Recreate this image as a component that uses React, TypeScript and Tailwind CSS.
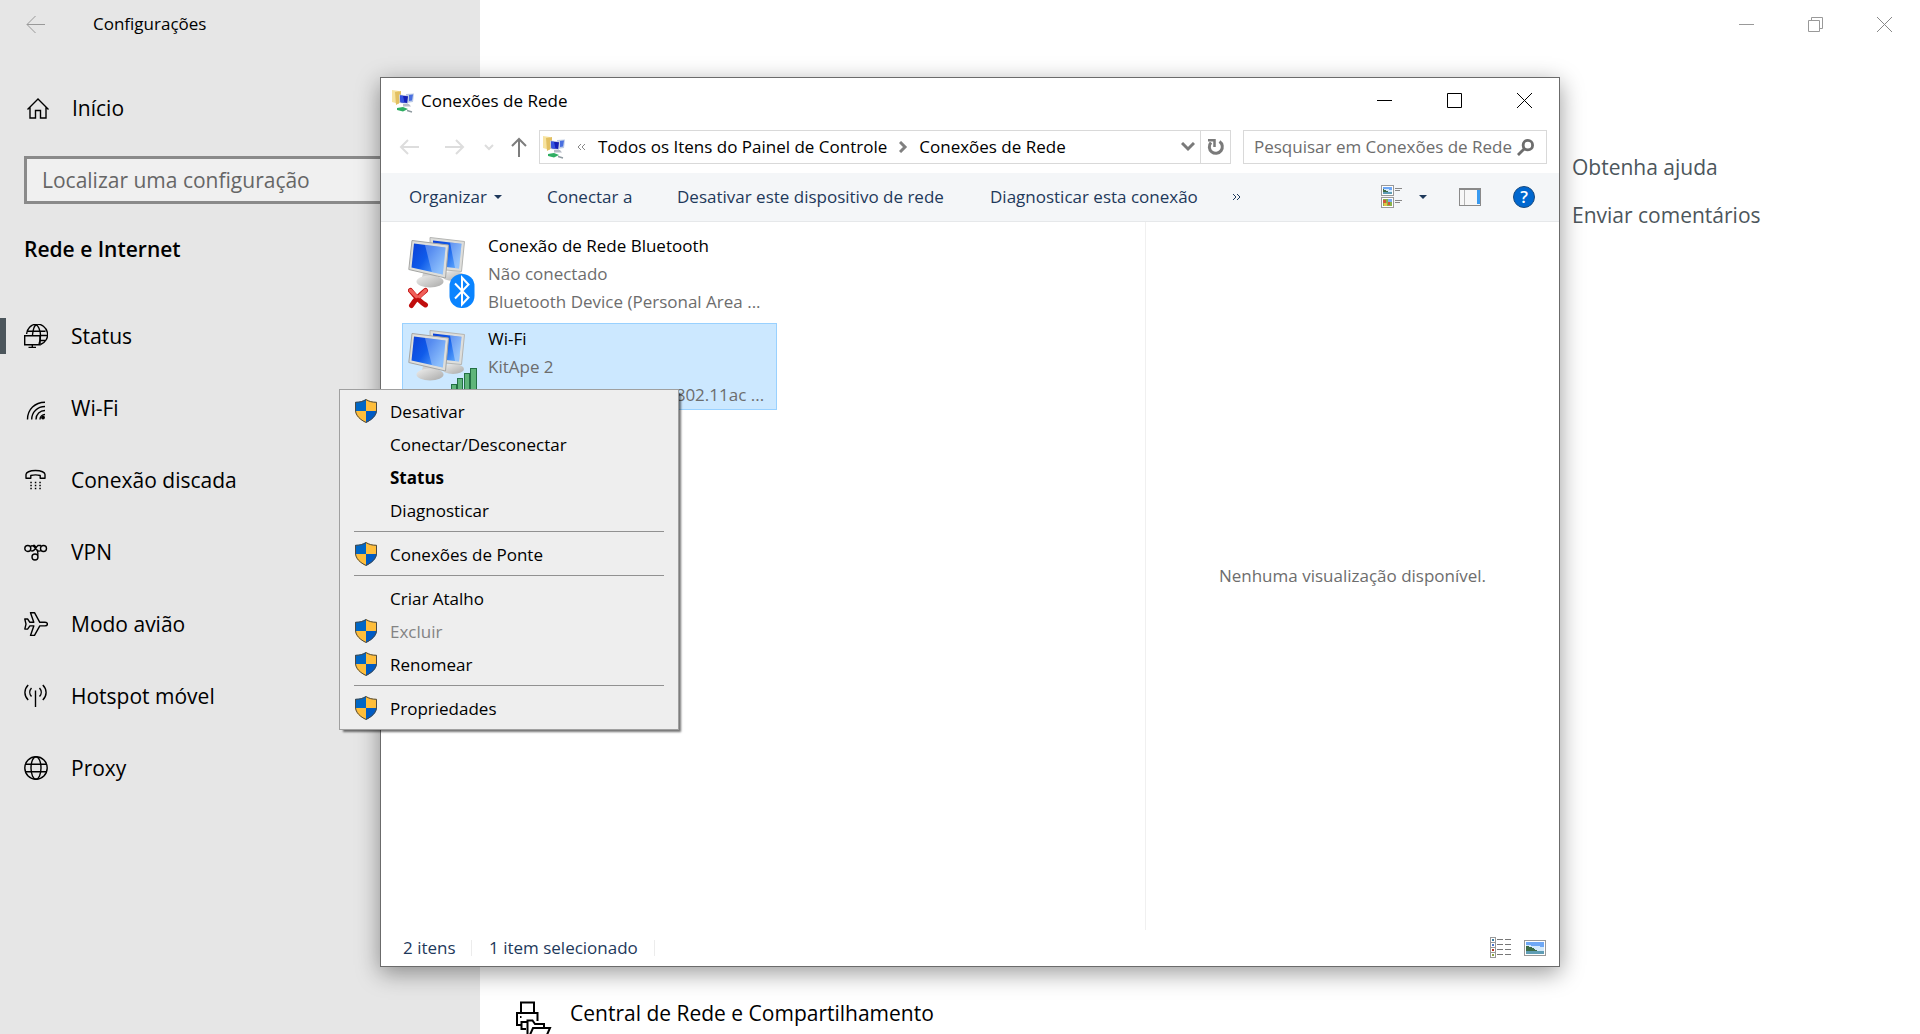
import React from "react";

type Children = { children: React.ReactNode };

/* ---------- line icons of the settings sidebar ---------- */

function LineIcon({ children }: Children) {
  return (
    <svg width="24" height="24" viewBox="0 0 24 24" fill="none" stroke="#000" strokeWidth="1.4" aria-hidden="true">
      {children}
    </svg>
  );
}

const HomeIcon = () => (
  <LineIcon>
    <path d="M1.5 12.5 12 2l10.5 10.5M4 10.5V21h5.500v-7.500h5V21H20V10.500" />
  </LineIcon>
);

const StatusIcon = () => (
  <LineIcon>
    <path d="M2.600 10A10.500 10.500 0 1 1 16.500 20.500M3 7.300h18.500M16 11.500h6.800M16.500 16.500h5M8.500 11C8.800 6 10.500 1 12.200 1s4.300 5 4.300 10.500c0 3-.4 6-1.500 8.500" />
    <path d="M.7 11.700h15.300v9H.7zM8.300 20.700v2.600M4.500 23.500h7.500" />
  </LineIcon>
);

const WifiIcon = () => (
  <LineIcon>
    <path d="M3.500 23.500C3.500 13.500 11 6.200 21 6.200M7.700 23.500c0-7.500 5.800-13 13.300-13M12 23.500c0-5.200 4-9 9-9M16 23.500c0-2.800 2.200-5 5-5" />
    <circle cx="19" cy="21.500" r="1.900" fill="#000" stroke="none" />
  </LineIcon>
);

const DialIcon = () => (
  <LineIcon>
    <path d="M2 10.200V6.500C2 4.500 5.500 2.500 11.500 2.500S21 4.500 21 6.500v3.700h-4.800V7.500c-3-.8-6.400-.8-9.400 0v2.700z" strokeLinejoin="round" />
    <path d="M6.300 14.500h10.500M6.300 17.500h10.500M6.300 20.500h10.500" strokeDasharray="1.500 3" />
  </LineIcon>
);

const VpnIcon = () => (
  <LineIcon>
    <circle cx="3.800" cy="8.500" r="3" />
    <circle cx="19.500" cy="8.500" r="3" />
    <circle cx="11" cy="17" r="3" />
    <path d="M6.300 6.500C9 4.500 10.500 7 11.800 8.800S15 12 17 10.500M9 5.500h1.500l1.500 2 2-2H17M6.500 10.500c2 1.200 3.200.5 4.600-1.500l1.500-2M13.500 15.500c1.500-2.500-1-4 .2-6" />
  </LineIcon>
);

const PlaneIcon = () => (
  <LineIcon>
    <path
      d="M.8 7h2.800l2.300 3.300h3.900L6.500.7h4l5.300 9.600h5.200c3.200 0 3.200 3.600 0 3.600h-5.200l-5.300 9.500h-4l3.300-9.500H5.900l-2.300 3.200H.8l1.200-5z"
      strokeLinejoin="round"
    />
  </LineIcon>
);

const HotspotIcon = () => (
  <LineIcon>
    <path d="M11.500 6.500V23M7.500 4c-2.300 2.500-2.300 6 0 8.500M4.200 1C-.2 5.500-.2 11.500 4.200 16M15.500 4c2.300 2.500 2.300 6 0 8.500M18.800 1c4.400 4.500 4.400 10.500 0 15" />
  </LineIcon>
);

const GlobeIcon = () => (
  <LineIcon>
    <circle cx="12" cy="12" r="11.200" />
    <ellipse cx="12" cy="12" rx="5" ry="11.200" />
    <path d="M2 8.200h20M2 15.800h20" />
  </LineIcon>
);

function SharingIcon() {
  return (
    <svg width="37" height="37" viewBox="0 0 37 37" fill="none" stroke="#000" strokeWidth="2" aria-hidden="true">
      <path d="M6 12V1.500h13V12M19 12h3.500v8M6 12H2v12h4.500M6 12h13M11 28H6.500v-7H12" />
      <path d="M12.500 36V19.500h5l2.500 3.500h9v4M14 36l4-9h17l-4 9" fill="#fff" />
      <path d="M5 16h1.500" />
    </svg>
  );
}

/* ---------- coloured icons of the explorer window ---------- */

function NetworkFolderIcon() {
  return (
    <svg width="24" height="24" viewBox="0 0 24 24" aria-hidden="true">
      <path d="M1 1l7 1v13l-7-2z" fill="#f7e3a0" />
      <path d="M4 3l6-1v11l-5 3z" fill="#e2c062" />
      <path d="M15 5l8-.5-1 8.500-7 1z" fill="#bccbe6" />
      <path d="M18 6l4-.5-1 6-3 .5z" fill="#4a70e0" />
      <path d="M8 5.500l10 1-1 8.500-8.500-1z" fill="#c9d2e4" />
      <path d="M9 6.500l8 .8-.8 6.700-6.700-.8z" fill="#1420b4" />
      <path d="M9 6.500l3 .3 1.500 7-4-.6z" fill="#3554e0" />
      <path d="M12 15h6l2 2.500h-8z" fill="#b7bcc6" />
      <path d="M6 19l6-1 5 2-5 2.500-6-1.500z" fill="#2fae62" />
      <path d="M16 21.500l5 1.500" stroke="#8f9aa0" strokeWidth="1.400" />
    </svg>
  );
}

function Monitors({ id }: { id: string }) {
  return (
    <>
      <defs>
        <linearGradient id={id} x1="0" y1="0" x2="1" y2="0.6">
          <stop offset="0" stopColor="#0b3fd6" />
          <stop offset="0.5" stopColor="#0f5bea" />
          <stop offset="1" stopColor="#5ba4fb" />
        </linearGradient>
        <linearGradient id={`${id}-base`} x1="0" y1="0" x2="1" y2="1">
          <stop offset="0" stopColor="#efefee" />
          <stop offset="1" stopColor="#a9a9a8" />
        </linearGradient>
      </defs>
      <ellipse cx="45" cy="39" rx="11" ry="5" fill={`url(#${id}-base)`} />
      <path d="M22 .5l34.500 4-3 30-31-3z" fill="#dededb" stroke="#b4b5b3" />
      <path d="M25 3.500l28.500 3.300-2.500 24.700-26-3z" fill={`url(#${id})`} />
      <path d="M42 5.500l11.500 1.300L51 31.500l-4-.5z" fill="#fff" opacity="0.35" />
      <path d="M15 36h13l2 8c-4 3-14 3-17 0z" fill="#d2d2d2" />
      <ellipse cx="22" cy="44.500" rx="13.500" ry="6" fill={`url(#${id}-base)`} />
      <path d="M4 3.500l36.500 4.500-3 33L.8 32.500z" fill="#dededb" stroke="#a4a5a3" />
      <path d="M6 6.500l31.500 4-2.700 27L3.500 30.500z" fill={`url(#${id})`} />
      <path d="M17 8l20.500 2.500-2.700 27-11-2.500z" fill="#fff" opacity="0.3" />
    </>
  );
}

function BluetoothConnectionIcon() {
  return (
    <svg width="68" height="72" viewBox="0 0 68 72" aria-hidden="true">
      <Monitors id="bt-screen" />
      <path d="M2.500 53.500c4 5 9 11 15 14.500M17.500 53.500c-5 4-11 10-14 15" fill="none" stroke="#c00d0d" strokeWidth="5" strokeLinecap="round" />
      <path d="M2.500 53.500l6 6M17.500 53.500l-6 6" stroke="#f0605a" strokeWidth="3.500" strokeLinecap="round" />
      <rect x="41.500" y="37" width="25" height="34" rx="12" fill="#0a84ff" />
      <path d="M47 46.500l13.500 14-6.500 7V40.500l6.500 7L47 61.500" fill="none" stroke="#fff" strokeWidth="2" />
    </svg>
  );
}

function WifiConnectionIcon() {
  return (
    <svg width="70" height="72" viewBox="0 0 70 72" aria-hidden="true">
      <Monitors id="wifi-screen" />
      <g fill="#5fb57a" stroke="#237044">
        <rect x="43.500" y="54.500" width="5" height="17" />
        <rect x="49.500" y="48.500" width="5" height="23" />
        <rect x="56.500" y="43.500" width="5" height="28" />
        <rect x="62.500" y="38.500" width="6" height="33" />
      </g>
    </svg>
  );
}

function ShieldIcon() {
  return (
    <svg width="24" height="24" viewBox="0 0 24 24" aria-hidden="true">
      <path d="M12 0v12H1V3C6 3 9 2 12 0z" fill="#0067c5" />
      <path d="M12 0v12h11V3c-5 0-8-1-11-3z" fill="#ffbe3b" />
      <path d="M1 12h11v12C6 21 1.500 17 1 12z" fill="#ffbe3b" />
      <path d="M23 12H12v12c6-3 10.500-7 11-12z" fill="#005bc4" />
      <path d="M12 .6C9 2.400 6 3.300 1.500 3.300V11c0 5.500 5 10 10.500 12.400C17.500 21 22.500 16.500 22.500 11V3.300C18 3.300 15 2.400 12 .6z" fill="none" stroke="#4b4a45" />
    </svg>
  );
}

function Landscape({ x, y, w, h }: { x: number; y: number; w: number; h: number }) {
  return (
    <svg x={x} y={y} width={w} height={h} viewBox="0 0 18 12" preserveAspectRatio="none">
      <path d="M0 0h18v12H0z" fill="#6fa8f5" />
      <path d="M0 3l18 2v4H0z" fill="#d3e9fb" />
      <path d="M0 4l5 1 7 4H0z" fill="#3d6b45" />
      <path d="M0 9h18v3H0z" fill="#5f9db5" />
    </svg>
  );
}

function ViewIcon() {
  return (
    <svg width="22" height="24" viewBox="0 0 22 24" shapeRendering="crispEdges" aria-hidden="true">
      <path d="M.5.500h12v10H.5zM.5 12.500h12v10H.5z" fill="#fff" stroke="#999" />
      <Landscape x={2} y={2} w={9} h={7} />
      <path d="M2 14h9v7H2z" fill="#8ab24a" />
      <path d="M2 15h3v3H2zM7 17h2v3H7z" fill="#d0583a" />
      <path d="M7 14h4v3H7z" fill="#7aaaf0" />
      <path d="M3 18h3v3H3z" fill="#e5c445" />
      <path d="M14 3.500h7M14 5.500h5M14 15.500h7M14 17.500h5" stroke="#888" />
    </svg>
  );
}

function PaneIcon() {
  return (
    <svg width="22" height="18" viewBox="0 0 22 18" shapeRendering="crispEdges" aria-hidden="true">
      <path d="M.5 1h21v16H.5z" fill="#f7f7f7" stroke="#8a8a8a" />
      <path d="M0 0h22v2H0z" fill="#8a8a8a" />
      <path d="M5.500 2v15" stroke="#b5b5b5" />
      <path d="M18 2h3v14h-3z" fill="#3a9bf0" />
    </svg>
  );
}

function DetailsIcon() {
  return (
    <svg width="22" height="22" viewBox="0 0 22 22" shapeRendering="crispEdges" aria-hidden="true">
      <path d="M.5.500h5v20h-5zM.5 5.500h5M.5 10.500h5M.5 15.500h5" fill="#fff" stroke="#999" />
      <path d="M2 2h2v2H2z" fill="#3b7ca0" />
      <path d="M2 7h2v2H2z" fill="#4a74c9" />
      <path d="M2 12h2v2H2z" fill="#b5301c" />
      <path d="M2 17h2v2H2z" fill="#8ca23c" />
      <path d="M7 2.500h6M15 2.500h6M7 7.500h6M15 7.500h6M7 12.500h6M15 12.500h6M7 17.500h6M15 17.500h6" stroke="#777" />
    </svg>
  );
}

function ThumbnailsIcon() {
  return (
    <svg width="22" height="16" viewBox="0 0 22 16" shapeRendering="crispEdges" aria-hidden="true">
      <path d="M.5.500h21v15H.5z" fill="#fff" stroke="#999" />
      <Landscape x={2} y={2} w={18} h={12} />
    </svg>
  );
}

function Stroke({ d, w, h, color, width }: { d: string; w: number; h: number; color: string; width: number }) {
  return (
    <svg width={w} height={h} viewBox={`0 0 ${w} ${h}`} fill="none" stroke={color} strokeWidth={width} aria-hidden="true">
      <path d={d} />
    </svg>
  );
}

function Caret() {
  return (
    <svg width="8" height="4" viewBox="0 0 8 4" aria-hidden="true">
      <path d="M0 0h8L4 4z" fill="#1e395b" />
    </svg>
  );
}

/* ---------- settings page ---------- */

const navItems = [
  { label: "Status", Icon: StatusIcon, active: true },
  { label: "Wi-Fi", Icon: WifiIcon },
  { label: "Conexão discada", Icon: DialIcon },
  { label: "VPN", Icon: VpnIcon },
  { label: "Modo avião", Icon: PlaneIcon },
  { label: "Hotspot móvel", Icon: HotspotIcon },
  { label: "Proxy", Icon: GlobeIcon },
];

function Sidebar() {
  return (
    <aside className="flex w-[480px] shrink-0 flex-col bg-[#e6e6e6]">
      <header className="flex h-12 items-center pl-[26px] text-[17px]">
        <button aria-label="Voltar" className="w-[67px]">
          <Stroke d="M1 9.500h18M9.500 1L1 9.500 9.500 18" w={20} h={19} color="#999" width={1} />
        </button>
        <h1>Configurações</h1>
      </header>
      <button className="mt-[37px] flex h-12 items-center gap-[22px] pl-[26px] text-left text-[21px]">
        <HomeIcon />
        Início
      </button>
      <div className="mt-[23px] px-6">
        <input
          type="text"
          aria-label="Localizar uma configuração"
          placeholder="Localizar uma configuração"
          className="h-12 w-full border-[3px] border-[#8a8a8a] bg-[#f0f0f0] px-[15px] text-[21px] placeholder:text-[#666]"
        />
      </div>
      <h2 className="mt-7 pl-6 text-[21px] leading-[34px] font-semibold">Rede e Internet</h2>
      <nav className="mt-[34px] flex flex-col">
        {navItems.map(({ label, Icon, active }) => (
          <a key={label} href="#" className="flex h-[72px] items-center text-[21px]">
            <span className={active ? "h-9 w-[6px] bg-[#4c565c]" : "w-[6px]"} />
            <span className="mr-[23px] ml-[18px]">
              <Icon />
            </span>
            <span className="pt-[2px]">{label}</span>
          </a>
        ))}
      </nav>
    </aside>
  );
}

function SettingsMain() {
  return (
    <main className="flex grow flex-col bg-white">
      <div className="flex h-12 justify-end pr-px">
        <button aria-label="Minimizar configurações" className="grid w-[69px] place-items-center">
          <Stroke d="M0 7.500h15" w={15} h={15} color="#999" width={1} />
        </button>
        <button aria-label="Restaurar configurações" className="grid w-[69px] place-items-center">
          <Stroke d="M.5 3.500h11v11H.5zM3.500 3V.5h11v11H12" w={15} h={15} color="#999" width={1} />
        </button>
        <button aria-label="Fechar configurações" className="grid w-[69px] place-items-center">
          <Stroke d="M0 0l15 15M15 0L0 15" w={15} h={15} color="#888" width={1} />
        </button>
      </div>
      <div className="mt-[103px] flex w-[348px] flex-col items-start gap-4 self-end text-[21px] leading-8 text-[#4c565c]">
        <a href="#">Obtenha ajuda</a>
        <a href="#">Enviar comentários</a>
      </div>
      <a href="#" className="mt-auto flex h-[33px] items-start gap-[18px] pl-[35px] text-[21px] leading-6">
        <SharingIcon />
        Central de Rede e Compartilhamento
      </a>
    </main>
  );
}

/* ---------- explorer window ---------- */

function TitleBar() {
  return (
    <header className="flex h-[45px] shrink-0 items-stretch">
      <div className="flex grow items-center gap-[6px] pl-[10px] text-[17px]">
        <NetworkFolderIcon />
        <h2>Conexões de Rede</h2>
      </div>
      <button aria-label="Minimizar" className="grid w-[70px] place-items-center">
        <Stroke d="M0 7.500h15" w={15} h={15} color="#000" width={1} />
      </button>
      <button aria-label="Maximizar" className="grid w-[70px] place-items-center">
        <Stroke d="M.5.500h14v14H.5z" w={15} h={15} color="#000" width={1} />
      </button>
      <button aria-label="Fechar" className="grid w-[70px] place-items-center">
        <Stroke d="M0 0l15 15M15 0L0 15" w={15} h={15} color="#000" width={1} />
      </button>
    </header>
  );
}

function AddressRow() {
  return (
    <div className="flex h-[50px] shrink-0 items-center pr-3 pb-[2px] pl-[18px] text-[17px]">
      <button aria-label="Anterior" className="mr-[26px]">
        <Stroke d="M2 8h18M9 1L2 8l7 7" w={20} h={16} color="#ddd" width={2} />
      </button>
      <button aria-label="Próximo" className="mr-[19px]">
        <Stroke d="M0 8h18M11 1l7 7-7 7" w={20} h={16} color="#ddd" width={2} />
      </button>
      <button aria-label="Locais recentes" className="mr-[17px]">
        <Stroke d="M1 1l4 4 4-4" w={10} h={7} color="#ddd" width={2} />
      </button>
      <button aria-label="Acima" className="mr-3">
        <Stroke d="M8 20V2M1 9l7-7 7 7" w={16} h={20} color="#7d7d7d" width={2} />
      </button>
      <div className="flex h-[34px] grow items-stretch border border-[#d9d9d9]">
        <div className="flex grow items-center pl-[2px]">
          <NetworkFolderIcon />
          <span className="mr-3 ml-[11px]">
            <Stroke d="M4 1L1 4l3 3M8 1L5 4l3 3" w={9} h={8} color="#888" width={1} />
          </span>
          <button>Todos os Itens do Painel de Controle</button>
          <span className="mr-[11px] ml-[12px]">
            <Stroke d="M1 1l5 5-5 5" w={9} h={12} color="#808080" width={3} />
          </span>
          <button>Conexões de Rede</button>
          <button aria-label="Locais anteriores" className="mr-[5px] ml-auto">
            <Stroke d="M1 1l6 6 6-6" w={14} h={10} color="#7a7a7a" width={3} />
          </button>
        </div>
        <button aria-label="Atualizar" className="grid w-[30px] place-items-center border-l border-[#d9d9d9]">
          <svg width="18" height="18" viewBox="0 0 18 18" fill="none" stroke="#7a7a7a" strokeWidth="3" aria-hidden="true">
            <path d="M12.500 3.500a6.500 6.500 0 1 1-8.500 1" />
            <path d="M1 2.300h6.500V9" strokeWidth="2.500" />
          </svg>
        </button>
      </div>
      <div className="ml-3 flex h-[34px] w-[304px] items-center border border-[#d9d9d9] pr-3 pl-[10px]">
        <input
          type="text"
          aria-label="Pesquisar em Conexões de Rede"
          placeholder="Pesquisar em Conexões de Rede"
          className="w-full min-w-0 outline-none placeholder:text-[#6d6d6d]"
        />
        <svg className="shrink-0" width="17" height="17" viewBox="0 0 18 18" fill="none" stroke="#6d6d6d" strokeWidth="3" aria-hidden="true">
          <circle cx="11.500" cy="6.500" r="5" />
          <path d="M8 10l-7 7" />
        </svg>
      </div>
    </div>
  );
}

function Toolbar() {
  return (
    <div className="flex h-[49px] shrink-0 items-center border-b border-[#e6e8ea] bg-[#f4f6f8] pl-7 text-[17px] text-[#1e395b]">
      <button className="flex w-[138px] items-center gap-[7px]">
        Organizar
        <Caret />
      </button>
      <button className="w-[130px] text-left">Conectar a</button>
      <button className="w-[313px] text-left">Desativar este dispositivo de rede</button>
      <button className="w-[242px] text-left">Diagnosticar esta conexão</button>
      <button aria-label="Mais comandos">
        <Stroke d="M1 1l3 3-3 3M5 1l3 3-3 3" w={9} h={8} color="#1e395b" width={1} />
      </button>
      <button aria-label="Modo de exibição" className="mr-8 ml-auto flex items-center gap-4">
        <ViewIcon />
        <Caret />
      </button>
      <button aria-label="Painel de visualização" className="mr-8">
        <PaneIcon />
      </button>
      <button
        aria-label="Ajuda"
        className="mr-6 grid size-[22px] place-items-center rounded-full border border-[#174a80] bg-[#0067cf] text-[17px] leading-5 font-semibold text-white"
      >
        ?
      </button>
    </div>
  );
}

function Connection({
  icon,
  name,
  state,
  device,
  selected = false,
}: {
  icon: React.ReactNode;
  name: string;
  state: string;
  device: string;
  selected?: boolean;
}) {
  return (
    <li
      className={
        selected
          ? "flex h-[87px] border border-[#99d1ff] bg-[#cce8ff] pt-px pl-[5px]"
          : "flex h-[87px] border border-transparent pt-px pl-[5px]"
      }
    >
      <span className="mt-[5px] w-20 shrink-0">{icon}</span>
      <div className="min-w-0 text-[17px] leading-7 whitespace-nowrap text-[#6d6d6d]">
        <p className="text-black">{name}</p>
        <p>{state}</p>
        <p>{device}</p>
      </div>
    </li>
  );
}

function ExplorerWindow() {
  return (
    <section
      aria-label="Conexões de Rede"
      className="absolute top-[77px] right-[360px] bottom-[67px] left-[380px] flex flex-col border border-[#6b6b6b] bg-white shadow-[0_6px_22px_rgba(0,0,0,0.4)]"
    >
      <TitleBar />
      <AddressRow />
      <Toolbar />
      <div className="flex min-h-0 grow">
        <ul className="flex grow flex-col gap-[6px] pt-2 pl-[21px] [&>li]:w-[375px]">
          <Connection
            icon={<BluetoothConnectionIcon />}
            name="Conexão de Rede Bluetooth"
            state="Não conectado"
            device="Bluetooth Device (Personal Area ..."
          />
          <Connection
            icon={<WifiConnectionIcon />}
            name="Wi-Fi"
            state="KitApe 2"
            device="Realtek 8821C Wireless 802.11ac ..."
            selected
          />
        </ul>
        <aside className="grid w-[414px] shrink-0 place-items-center border-l border-[#f0f0f0] text-[17px] text-[#6d6d6d]">
          <p>Nenhuma visualização disponível.</p>
        </aside>
      </div>
      <footer className="flex h-9 shrink-0 items-center pr-[13px] pl-[22px] text-[17px] text-[#1e395b]">
        <span className="w-[68px]">2 itens</span>
        <span className="mr-[17px] h-4 w-px bg-[#ececec]" />
        <span className="w-[165px]">1 item selecionado</span>
        <span className="h-4 w-px bg-[#ececec]" />
        <button aria-label="Detalhes" className="mr-3 ml-auto">
          <DetailsIcon />
        </button>
        <button aria-label="Miniaturas">
          <ThumbnailsIcon />
        </button>
      </footer>
    </section>
  );
}

/* ---------- context menu ---------- */

type Entry = { label: string; shield?: boolean; bold?: boolean; disabled?: boolean };

const menuGroups: Entry[][] = [
  [
    { label: "Desativar", shield: true },
    { label: "Conectar/Desconectar" },
    { label: "Status", bold: true },
    { label: "Diagnosticar" },
  ],
  [{ label: "Conexões de Ponte", shield: true }],
  [
    { label: "Criar Atalho" },
    { label: "Excluir", shield: true, disabled: true },
    { label: "Renomear", shield: true },
  ],
  [{ label: "Propriedades", shield: true }],
];

function ContextMenu() {
  return (
    <div
      role="menu"
      className="absolute top-[389px] left-[339px] w-[340px] border border-[#a0a0a0] bg-[#eee] pt-1 pb-[5px] text-[17px] shadow-[3px_3px_2px_-1px_rgba(0,0,0,0.55)]"
    >
      {menuGroups.map((group, index) => (
        <div key={index} role="group">
          {index > 0 && <div role="separator" className="mx-[14px] my-[5px] h-px bg-[#919191]" />}
          {group.map((entry) => (
            <button
              key={entry.label}
              role="menuitem"
              disabled={entry.disabled}
              className="flex h-[33px] w-full items-center pl-[14px] text-left disabled:text-[#838383]"
            >
              <span className="w-9">{entry.shield && <ShieldIcon />}</span>
              <span className={entry.bold ? "pt-[2px] font-bold" : "pt-[2px]"}>{entry.label}</span>
            </button>
          ))}
        </div>
      ))}
    </div>
  );
}

export default function App() {
  return (
    <div className="relative flex h-screen overflow-hidden bg-white font-['Open_Sans',sans-serif] text-black">
      <Sidebar />
      <SettingsMain />
      <ExplorerWindow />
      <ContextMenu />
    </div>
  );
}
